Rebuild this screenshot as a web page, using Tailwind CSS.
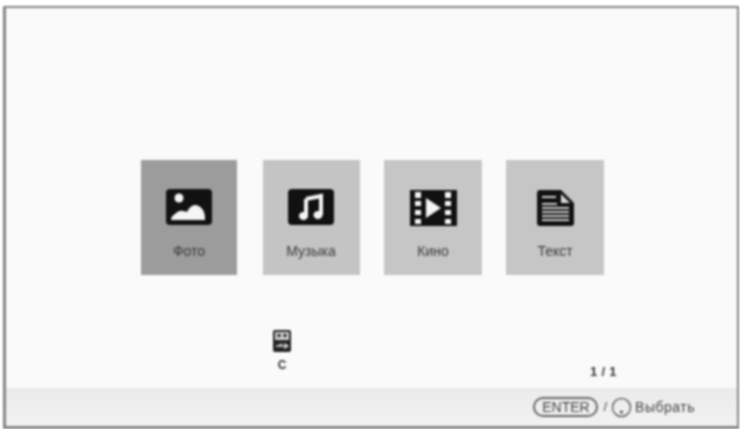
<!DOCTYPE html>
<html lang="en">
<head>
  <meta charset="UTF-8">
  <title>Media</title>
  <script src="https://cdn.jsdelivr.net/npm/@tailwindcss/browser@4"></script>
</head>
<body class="bg-white w-[740px] h-[429px] overflow-hidden font-['Liberation_Sans',sans-serif]">
  <div class="ml-[3px] mr-[1px] mt-[6px] h-[423px] border-t-2 border-r-2 border-l-[3px] border-b-[3px] border-[#858585] bg-[#fafafa] flex flex-col blur-[0.8px]">
    <main class="flex-1 min-h-0">
      <!-- category tiles -->
      <div class="ml-[135px] mt-[152px] flex">
        <div class="w-[96px] h-[115px] mr-[26px] bg-[#9c9c9c] flex flex-col items-center pt-[29px]">
          <svg width="46" height="36" viewBox="0 0 46 36">
            <rect width="46" height="36" rx="4" fill="#111"/>
            <circle cx="13" cy="9" r="4.500" fill="#f5f5f5"/>
            <path d="M5 31c0-3 2-5 4-6 2-2 5-4 8-3 2 0 3 1 4 1 2-4 5-7 8-7 4 0 7 3 9 7 1 3 1 6 1 8z" fill="#f5f5f5"/>
          </svg>
          <span class="mt-[19px] text-[14px] leading-[14px] text-[#3a3a3a]">Фото</span>
        </div>
        <div class="w-[97px] h-[115px] mr-[24px] pr-[1px] bg-[#c4c4c4] flex flex-col items-center pt-[29px]">
          <svg width="46" height="36" viewBox="0 0 46 36">
            <rect width="46" height="36" rx="4" fill="#111"/>
            <path d="M18 10l15-3v19M18 10v17" fill="none" stroke="#f5f5f5" stroke-width="4"/>
            <ellipse cx="15.500" cy="27" rx="4.500" ry="4" fill="#f5f5f5"/>
            <ellipse cx="30" cy="26" rx="4.500" ry="4" fill="#f5f5f5"/>
          </svg>
          <span class="mt-[19px] text-[14px] leading-[14px] text-[#3a3a3a]">Музыка</span>
        </div>
        <div class="w-[98px] h-[115px] mr-[24px] bg-[#c6c6c6] flex flex-col items-center pt-[30px]">
          <svg width="47" height="36" viewBox="0 0 47 36">
            <rect width="47" height="36" fill="#111"/>
            <g fill="#f5f5f5">
              <rect x="5" y="2" width="6" height="6"/><rect x="5" y="11" width="6" height="5"/><rect x="5" y="20" width="6" height="5"/><rect x="5" y="29" width="6" height="5"/>
              <rect x="35" y="2" width="6" height="6"/><rect x="35" y="11" width="6" height="5"/><rect x="35" y="20" width="6" height="5"/><rect x="35" y="29" width="6" height="5"/>
              <path d="M16 8l15 10-15 10z"/>
            </g>
          </svg>
          <span class="mt-[18px] text-[14px] leading-[14px] text-[#3a3a3a]">Кино</span>
        </div>
        <div class="w-[98px] h-[115px] bg-[#c6c6c6] flex flex-col items-center pt-[30px]">
          <svg width="37" height="36" viewBox="0 0 37 36">
            <path d="M3 0h21l13 13v20a3 3 0 0 1-3 3H3a3 3 0 0 1-3-3V3a3 3 0 0 1 3-3z" fill="#111"/>
            <path d="M24 4l9 9h-9z" fill="#d8d8d8"/>
            <g fill="#cfcfcf">
              <rect x="5" y="6" width="14" height="2"/><rect x="5" y="13" width="15" height="2"/>
              <rect x="5" y="17" width="27" height="2"/><rect x="5" y="21" width="27" height="2"/><rect x="5" y="25" width="27" height="2"/><rect x="5" y="29" width="27" height="2"/>
            </g>
          </svg>
          <span class="mt-[18px] text-[14px] leading-[14px] text-[#3a3a3a]">Текст</span>
        </div>
      </div>
      <!-- usb device -->
      <div class="ml-[267px] mt-[55px] w-[18px] flex flex-col items-center">
        <svg width="18" height="22" viewBox="0 0 18 22">
          <rect width="18" height="22" rx="2" fill="#222"/>
          <rect x="2" y="2" width="14" height="8" fill="#cfcfcf"/>
          <rect x="4.500" y="4" width="3" height="3" fill="#222"/><rect x="10.500" y="4" width="3" height="3" fill="#222"/>
          <path d="M3 16h12M11 13.500l4 2.500-4 2.500M6 16l2.500-2.500" fill="none" stroke="#ddd" stroke-width="1.300"/>
        </svg>
        <span class="mt-[7px] text-[12px] leading-[13px] font-bold text-[#333]">C</span>
      </div>
    </main>
    <footer class="h-[38px] bg-gradient-to-b from-[#ebebeb] to-[#f2f2f2] relative flex items-center justify-end pr-[42px] text-[#444]">
      <span class="absolute top-[-23px] left-[584px] text-[13px] leading-[14px] font-bold tracking-[0.3px] text-[#333]">1 / 1</span>
      <span class="w-[65px] h-[20px] flex items-center justify-center border-2 border-[#666] rounded-full text-[14px] leading-[14px]">ENTER</span>
      <span class="ml-[5px] mr-[4px] text-[13px]">/</span>
      <svg width="21" height="21" viewBox="0 0 21 21">
        <circle cx="10.500" cy="10.500" r="9" fill="none" stroke="#666" stroke-width="1.500"/>
        <circle cx="10.500" cy="15" r="1.500" fill="#444"/>
      </svg>
      <span class="ml-[3px] text-[14px] leading-[14px] tracking-[0.5px]">Выбрать</span>
    </footer>
  </div>
</body>
</html>
